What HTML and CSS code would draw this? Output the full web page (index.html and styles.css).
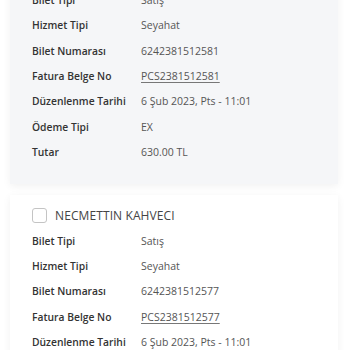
FILE: index.html
```html
<!DOCTYPE html>
<html lang="tr">
<head>
<meta charset="utf-8">
<link rel="stylesheet" href="styles.css">
</head>
<body>
<div class="page">
  <section class="card card-gray">
    <div class="row"><span class="label">Bilet Tipi</span><span class="value">Satış</span></div>
    <div class="row"><span class="label">Hizmet Tipi</span><span class="value">Seyahat</span></div>
    <div class="row"><span class="label">Bilet Numarası</span><span class="value">6242381512581</span></div>
    <div class="row"><span class="label">Fatura Belge No</span><span class="value link">PCS2381512581</span></div>
    <div class="row"><span class="label">Düzenlenme Tarihi</span><span class="value">6 Şub 2023, Pts - 11:01</span></div>
    <div class="row"><span class="label">Ödeme Tipi</span><span class="value">EX</span></div>
    <div class="row"><span class="label">Tutar</span><span class="value">630.00 TL</span></div>
  </section>
  <section class="card card-white">
    <div class="head"><span class="check"></span><span class="name">NECMETTIN KAHVECI</span></div>
    <div class="row"><span class="label">Bilet Tipi</span><span class="value">Satış</span></div>
    <div class="row"><span class="label">Hizmet Tipi</span><span class="value">Seyahat</span></div>
    <div class="row"><span class="label">Bilet Numarası</span><span class="value">6242381512577</span></div>
    <div class="row"><span class="label">Fatura Belge No</span><span class="value link">PCS2381512577</span></div>
    <div class="row"><span class="label">Düzenlenme Tarihi</span><span class="value">6 Şub 2023, Pts - 11:01</span></div>
    <div class="row"><span class="label">Ödeme Tipi</span><span class="value">EX</span></div>
  </section>
</div>
</body>
</html>
```
FILE: styles.css
```css
html, body {
  margin: 0;
  padding: 0;
  background: #ffffff;
  overflow: hidden;
}
body {
  font-family: "Open Sans", "Noto Sans", sans-serif;
  font-size: 10.5px;
  color: #444;
}
.page {
  width: 350px;
  height: 350px;
  overflow: hidden;
  padding: 0 10px;
  box-sizing: border-box;
}
.card {
  width: 328px;
  box-sizing: border-box;
  padding: 0 0 0 22px;
  box-shadow: 0 2px 8px rgba(0, 0, 0, 0.06);
}
.card-gray {
  background: #f5f6f8;
  margin-top: -12.6px;
  padding-bottom: 20px;
}
.card-white {
  background: #ffffff;
  margin-top: 11px;
  padding-top: 12px;
}
.row {
  display: flex;
  align-items: center;
  height: 25.3px;
}
.label {
  width: 109px;
  flex: none;
  font-size: 10.3px;
  font-weight: 600;
  color: #333;
}
.value {
  color: #555;
}
.link {
  text-decoration: underline;
  text-decoration-color: #777;
  text-underline-offset: 2px;
}
.head {
  display: flex;
  align-items: center;
  gap: 8px;
  height: 16px;
  margin-bottom: 4.5px;
}
.check {
  width: 13px;
  height: 13px;
  border: 1px solid #c4c4c4;
  border-radius: 3px;
  background: #fff;
}
.name {
  font-size: 12px;
  color: #444;
  letter-spacing: 0.1px;
}
```
